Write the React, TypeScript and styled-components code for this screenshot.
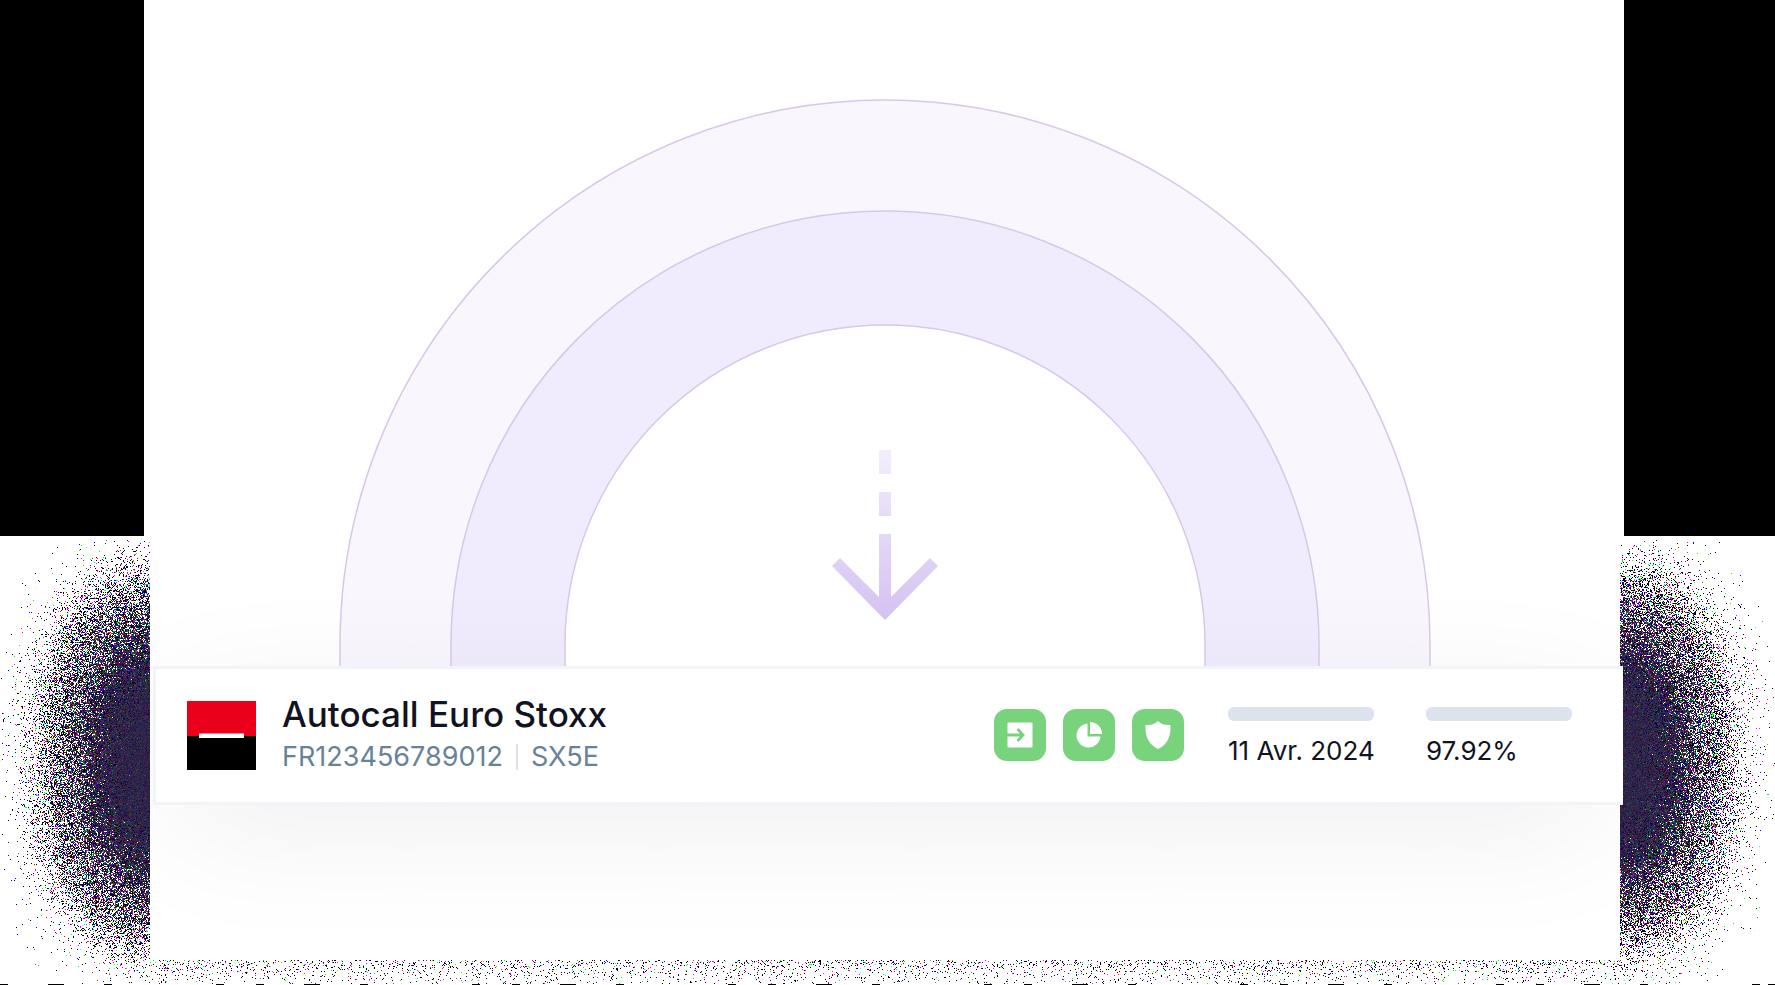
import React, { useLayoutEffect, useRef } from "react";
import styled, { createGlobalStyle } from "styled-components";

const GlobalStyle = createGlobalStyle`
  *, *::before, *::after { box-sizing: border-box; }
  body { margin: 0; background: #fff; font-family: Inter, "Liberation Sans", sans-serif; color: #111322; }
  p, h1 { margin: 0; }
`;

const Page = styled.main`
  position: relative;
  padding: 0 155px 25px 150px;
  overflow: hidden;
`;

const Backdrop = styled.div`
  position: absolute;
  inset: 0;
`;

const SideBlocks = styled.div`
  display: flex;
  justify-content: space-between;
  height: 536px;
`;

const SideBlock = styled.div<{ $width: number }>`
  width: ${(p) => p.$width}px;
  background: #000;
`;

const Grain = styled.canvas`
  position: absolute;
  inset: 0;
  width: 100%;
  height: 100%;
`;

const Panel = styled.section`
  position: relative;
  background: #fff;
  padding: 98px 0 155px;
  clip-path: inset(0 -3px 0 0);
`;

const Rings = styled.svg`
  position: relative;
  z-index: 1;
  display: block;
  margin: 0 auto;
`;

const Card = styled.article`
  display: flex;
  align-items: center;
  justify-content: space-between;
  margin: 0 -3px 0 3px;
  padding: 27px 51px 28px 31px;
  background: #fff;
  border: solid #f3f4f8;
  border-width: 3px 0 3px 3px;
  box-shadow: 0 30px 140px -20px rgba(24, 24, 56, 0.085);
`;

const Product = styled.div`
  display: flex;
  align-items: center;
  gap: 26px;
`;

const Title = styled.h1`
  font-size: 35px;
  line-height: 36px;
  font-weight: 500;
  white-space: nowrap;
`;

const Codes = styled.p`
  display: flex;
  align-items: center;
  gap: 13px;
  margin-top: 8px;
  font-size: 27px;
  line-height: 34px;
  color: #688299;
`;

const Divider = styled.span`
  width: 2px;
  height: 26px;
  background: #dfe2eb;
`;

const Details = styled.div`
  display: flex;
  align-items: center;
  gap: 44px;
`;

const Badges = styled.div`
  display: flex;
  gap: 17px;
`;

const Badge = styled.span`
  display: grid;
  place-items: center;
  width: 52px;
  height: 52px;
  border-radius: 13px;
  background: #79d27c;
`;

const Figures = styled.div`
  display: flex;
  gap: 52px;
`;

const Figure = styled.div`
  width: 146px;
  white-space: nowrap;
  font-size: 26px;
  line-height: 24px;
`;

const Bar = styled.div`
  height: 14px;
  margin-bottom: 18px;
  border-radius: 6px;
  background: #dde3ec;
`;

function paintGrain(canvas: HTMLCanvasElement) {
  const w = canvas.clientWidth;
  const h = canvas.clientHeight;
  canvas.width = w;
  canvas.height = h;
  const ctx = canvas.getContext("2d");
  if (!ctx) return;
  let seed = 90210;
  const rand = () => {
    seed = (seed + 0x6d2b79f5) | 0;
    let t = Math.imul(seed ^ (seed >>> 15), 1 | seed);
    t = (t + Math.imul(t ^ (t >>> 7), 61 | t)) ^ t;
    return ((t ^ (t >>> 14)) >>> 0) / 4294967296;
  };
  const image = ctx.createImageData(w, h);
  const tint = [46, 36, 72];
  for (let y = 540; y < h - 1; y++) {
    const fy = Math.exp(-Math.pow(Math.abs(y - 760) / 112, 2.5));
    for (let x = 0; x < w; x++) {
      const d = Math.max(0, 150 - x, x - (w - 155));
      const level = 9 * Math.exp(-Math.pow(d / 58, 2)) * fy;
      if (level < 0.002) continue;
      const g = rand() + rand() + rand() - 1.5;
      const a = Math.floor(level + g * 3 * Math.min(1.4, level) + rand());
      if (a <= 0) continue;
      const i = (y * w + x) * 4;
      // Red and blue share most of their noise, which tints the sparse specks magenta.
      const shared = rand();
      for (let c = 0; c < 3; c++) {
        const n = c === 1 || rand() < 0.3 ? rand() : shared;
        const v = Math.floor((tint[c] / 255) * a + n);
        image.data[i + c] = (255 * Math.min(a, v)) / a;
      }
      image.data[i + 3] = 255;
    }
  }
  ctx.putImageData(image, 0, 0);
  ctx.fillStyle = "#000";
  for (let x = 0; x < w; x += 256) {
    [[0, 8], [48, 16], [104, 8], [216, 8]].forEach(([dx, len]) => ctx.fillRect(x + dx, h - 1, len, 1));
  }
  ctx.fillRect(w - 7, h - 1, 7, 1);
}

function GrainLayer() {
  const ref = useRef<HTMLCanvasElement>(null);
  useLayoutEffect(() => {
    const paint = () => ref.current && paintGrain(ref.current);
    paint();
    window.addEventListener("resize", paint);
    return () => window.removeEventListener("resize", paint);
  }, []);
  return <Grain ref={ref} />;
}

const arch = (r: number) => `M${546 - r} 569V547A${r} ${r} 0 0 1 ${546 + r} 547V569`;

function RingArt() {
  return (
    <Rings width="1092" height="568" viewBox="0 0 1092 568" aria-hidden="true">
      <defs>
        <linearGradient id="arrow" gradientUnits="userSpaceOnUse" x1="0" y1="352" x2="0" y2="522">
          <stop offset="0" stopColor="#f3eefd" />
          <stop offset="1" stopColor="#d5c1f1" />
        </linearGradient>
      </defs>
      <path d={arch(545)} fill="#8246e6" fillOpacity="0.05" />
      <path d={arch(434)} fill="#6a4be8" fillOpacity="0.055" />
      <path d={arch(320)} fill="#fff" />
      <g fill="none" stroke="#d8c8e8" strokeWidth="1.5">
        <path d={arch(545)} />
        <path d={arch(434)} />
        <path d={arch(320)} />
      </g>
      <g fill="url(#arrow)">
        <path d="M540 352h12v24h-12zM540 394h12v24h-12z" />
        <path d="M493 468l8-8 39 39V436h12v63l39-39 8 8-53 54z" />
      </g>
    </Rings>
  );
}

export default function App() {
  return (
    <Page>
      <GlobalStyle />
      <Backdrop aria-hidden="true">
        <SideBlocks>
          <SideBlock $width={144} />
          <SideBlock $width={151} />
        </SideBlocks>
        <GrainLayer />
      </Backdrop>
      <Panel>
        <RingArt />
        <Card>
          <Product>
            <svg width="69" height="69" viewBox="0 0 69 69" aria-hidden="true">
              <path fill="#eb001b" d="M0 0h69v35H0z" />
              <path d="M0 35h69v34H0z" />
              <path fill="#fff" d="M12 32.500h45v4.500H12z" />
            </svg>
            <div>
              <Title>Autocall Euro Stoxx</Title>
              <Codes>
                <span>FR123456789012</span>
                <Divider />
                <span>SX5E</span>
              </Codes>
            </div>
          </Product>
          <Details>
            <Badges aria-hidden="true">
              <Badge>
                <svg width="26" height="26" viewBox="0 0 26 26">
                  <rect x="0.500" y="0.500" width="25" height="25" rx="1" fill="#fff" />
                  <path d="M0 13H15M10.500 7l5.500 6-5.500 6" fill="none" stroke="#79d27c" strokeWidth="2.800" />
                </svg>
              </Badge>
              <Badge>
                <svg width="26" height="26" viewBox="0 0 26 26" fill="#fff">
                  <path d="M11.500 1.500V14.500H24.500A12 12 0 1 1 11.500 1.500z" />
                  <path d="M14 0A12 12 0 0 1 26 12H14z" />
                </svg>
              </Badge>
              <Badge>
                <svg width="26" height="28" viewBox="0 0 26 28" fill="#fff">
                  <path d="M13 0C16 3 20 4.500 25.500 4C26 15 23 23 13 28C3 23 0 15 .500 4C6 4.500 10 3 13 0z" />
                </svg>
              </Badge>
            </Badges>
            <Figures>
              <Figure>
                <Bar />
                11 Avr. 2024
              </Figure>
              <Figure>
                <Bar />
                97.92%
              </Figure>
            </Figures>
          </Details>
        </Card>
      </Panel>
    </Page>
  );
}
